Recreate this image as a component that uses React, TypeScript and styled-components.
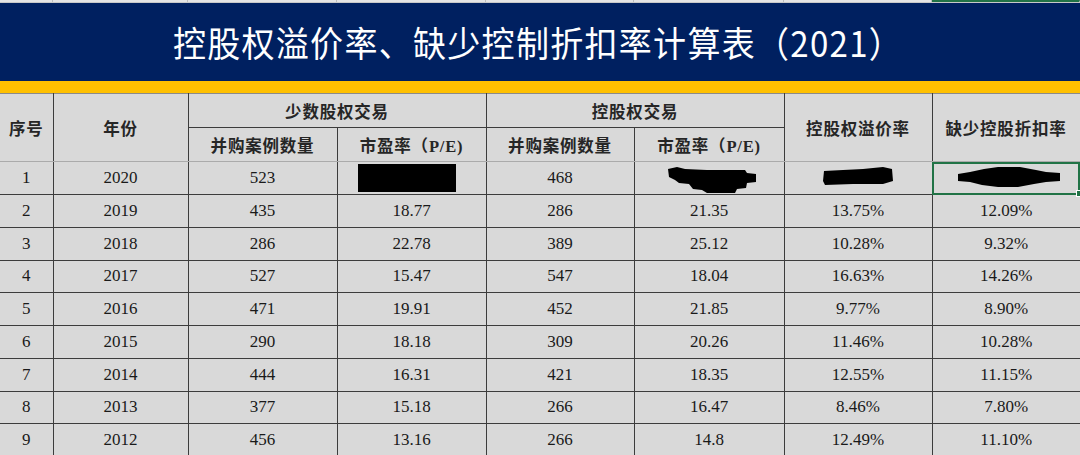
import styled, { createGlobalStyle } from "styled-components"

const GlobalStyle = createGlobalStyle`
  html, body {
    margin: 0;
    padding: 0;
    background: #d9d9d9;
  }
  * {
    box-sizing: border-box;
  }
`

const widths = [53, 135, 149, 149, 148, 150, 148, 148]

const Page = styled.div`
  width: 1080px;
  height: 455px;
  overflow: hidden;
  background: #d9d9d9;
  font-family: "Liberation Serif", "Noto Sans CJK SC", serif;
  color: #1a1a1a;
`

const TopStrip = styled.div`
  display: flex;
  height: 3px;
  background: #e4e4e4;
  border-bottom: 1px solid #c8c8c8;
`

const StripCell = styled.div<{ $w: number; $selected?: boolean }>`
  width: ${(p) => p.$w}px;
  flex: none;
  border-right: 1px solid #bdbdbd;
  border-top: ${(p) => (p.$selected ? "2px solid #217346" : "none")};
`

const TitleBand = styled.header`
  height: 78px;
  background: #002060;
  display: flex;
  align-items: center;
  justify-content: center;
  padding-right: 4px;
`

const Title = styled.h1`
  margin: 0;
  color: #ffffff;
  font-family: "Noto Sans CJK SC", sans-serif;
  font-weight: 400;
  font-size: 33px;
  letter-spacing: 1.3px;
  transform: scaleY(1.08);
`

const YellowBand = styled.div`
  height: 12px;
  background: #ffc000;
`

const Sheet = styled.table`
  width: 1080px;
  table-layout: fixed;
  border-collapse: collapse;
  border-top: 1px solid #8a8a8a;
  background: #d9d9d9;
`

const HeadRow = styled.tr`
  height: 34px;
`

const HeadCell = styled.th<{ $lightBottom?: boolean }>`
  padding: 0;
  border-left: 1px solid #3c3c3c;
  border-right: 1px solid #3c3c3c;
  border-bottom: 1px solid ${(p) => (p.$lightBottom ? "#ababab" : "#3c3c3c")};
  font-family: "Liberation Serif", "Noto Sans CJK SC", serif;
  font-weight: 700;
  font-size: 16.5px;
  letter-spacing: 0.8px;
  color: #262626;
  text-align: center;
  vertical-align: middle;
  white-space: nowrap;
  &:first-child {
    border-left: none;
  }
`

const DataRow = styled.tr`
  height: 32.75px;
`

const DataCell = styled.td<{ $selected?: boolean }>`
  position: relative;
  padding: 0;
  border: 1px solid #3c3c3c;
  font-size: 17px;
  color: #1a1a1a;
  text-align: center;
  vertical-align: middle;
  white-space: nowrap;
  &:first-child {
    border-left: none;
  }
  &:last-child {
    border-right: none;
  }
  ${(p) =>
    p.$selected &&
    `
    outline: 2px solid #217346;
    outline-offset: -2px;
    &::after {
      content: "";
      position: absolute;
      right: -3px;
      bottom: -3px;
      width: 5px;
      height: 5px;
      background: #217346;
      border: 1px solid #ffffff;
    }
  `}
`

const Redaction = styled.svg`
  display: block;
`

type Blob = "box" | "ragged" | "slab" | "lens"

function Blot({ kind }: { kind: Blob }) {
  if (kind === "box") {
    return (
      <Redaction width="98" height="28" viewBox="0 0 98 28" style={{ marginLeft: 20 }}>
        <rect x="0" y="0" width="98" height="28" fill="#000" />
      </Redaction>
    )
  }
  if (kind === "ragged") {
    return (
      <Redaction width="90" height="27" viewBox="0 0 90 27" style={{ marginLeft: 32, marginTop: 5 }}>
        <path d="M1 2 L10 0 L18 2 L40 3 L78 3 L80 6 L89 7 L89 15 L80 16 L79 21 L70 22 L68 26 L40 26 L35 23 L26 22 L22 17 L12 16 L8 13 L2 10 Z" fill="#000" />
      </Redaction>
    )
  }
  if (kind === "slab") {
    return (
      <Redaction width="70" height="18" viewBox="0 0 70 18" style={{ marginLeft: 38, marginTop: -5 }}>
        <path d="M1 4 L20 3 L40 2 L60 0 L69 2 L70 14 L60 17 L30 17 L2 18 L0 14 Z" fill="#000" />
      </Redaction>
    )
  }
  return (
    <Redaction width="102" height="22" viewBox="0 0 102 22" style={{ marginLeft: 25, marginTop: -3 }}>
      <path d="M0 8 L12 6 L26 3 L40 1 L62 1 L78 4 L88 6 L102 7 L102 15 L88 16 L76 18 L60 21 L40 21 L24 19 L12 16 L0 15 Z" fill="#000" />
    </Redaction>
  )
}

type Cell = string | { blot: Blob }

const rows: Cell[][] = [
  ["1", "2020", "523", { blot: "box" }, "468", { blot: "ragged" }, { blot: "slab" }, { blot: "lens" }],
  ["2", "2019", "435", "18.77", "286", "21.35", "13.75%", "12.09%"],
  ["3", "2018", "286", "22.78", "389", "25.12", "10.28%", "9.32%"],
  ["4", "2017", "527", "15.47", "547", "18.04", "16.63%", "14.26%"],
  ["5", "2016", "471", "19.91", "452", "21.85", "9.77%", "8.90%"],
  ["6", "2015", "290", "18.18", "309", "20.26", "11.46%", "10.28%"],
  ["7", "2014", "444", "16.31", "421", "18.35", "12.55%", "11.15%"],
  ["8", "2013", "377", "15.18", "266", "16.47", "8.46%", "7.80%"],
  ["9", "2012", "456", "13.16", "266", "14.8", "12.49%", "11.10%"],
]

export default function App() {
  return (
    <Page>
      <GlobalStyle />
      <TopStrip>
        {widths.map((w, i) => (
          <StripCell key={i} $w={w} $selected={i === widths.length - 1} />
        ))}
      </TopStrip>
      <TitleBand>
        <Title>控股权溢价率、缺少控制折扣率计算表（2021）</Title>
      </TitleBand>
      <YellowBand />
      <Sheet>
        <colgroup>
          {widths.map((w, i) => (
            <col key={i} style={{ width: w }} />
          ))}
        </colgroup>
        <thead>
          <HeadRow>
            <HeadCell rowSpan={2} $lightBottom>序号</HeadCell>
            <HeadCell rowSpan={2} $lightBottom>年份</HeadCell>
            <HeadCell colSpan={2}>少数股权交易</HeadCell>
            <HeadCell colSpan={2}>控股权交易</HeadCell>
            <HeadCell rowSpan={2} $lightBottom>控股权溢价率</HeadCell>
            <HeadCell rowSpan={2} $lightBottom>缺少控股折扣率</HeadCell>
          </HeadRow>
          <HeadRow>
            <HeadCell $lightBottom>并购案例数量</HeadCell>
            <HeadCell $lightBottom>市盈率（P/E)</HeadCell>
            <HeadCell $lightBottom>并购案例数量</HeadCell>
            <HeadCell $lightBottom>市盈率（P/E)</HeadCell>
          </HeadRow>
        </thead>
        <tbody>
          {rows.map((row, r) => (
            <DataRow key={r}>
              {row.map((cell, c) => (
                <DataCell key={c} $selected={r === 0 && c === row.length - 1}>
                  {typeof cell === "string" ? cell : <Blot kind={cell.blot} />}
                </DataCell>
              ))}
            </DataRow>
          ))}
        </tbody>
      </Sheet>
    </Page>
  )
}
